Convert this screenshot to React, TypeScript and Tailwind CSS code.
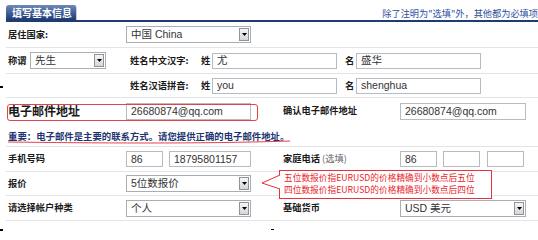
import React from "react";

const lbl =
  "font-['Noto_Sans_CJK_SC',sans-serif] text-[9.25px] font-bold text-[#1a1a1a] leading-none whitespace-nowrap";

const Arrow = () => (
  <span className="absolute right-[1px] top-[1px] bottom-[1px] flex w-[10px] items-center justify-center border border-[#8e949a] bg-gradient-to-b from-[#f6f6f6] to-[#d6d6d6]">
    <svg width="5" height="3" viewBox="0 0 5 3">
      <path d="M0 0h5L2.5 3z" fill="#000" />
    </svg>
  </span>
);

const Select = ({ value, w }: { value: string; w: string }) => (
  <div
    className={`relative flex h-[17px] shrink-0 items-center border border-[#a7aeb6] bg-white ${w}`}
  >
    <span className="pl-[4px] font-['Liberation_Sans','Noto_Sans_CJK_SC',sans-serif] text-[10.5px] leading-none text-[#333]">
      {value}
    </span>
    <Arrow />
  </div>
);

const Field = ({ value = "", w, h = "h-[16px]" }: { value?: string; w: string; h?: string }) => (
  <div
    className={`flex shrink-0 items-center border border-[#b7bcc3] bg-white pl-[4px] font-['Liberation_Sans','Noto_Sans_CJK_SC',sans-serif] text-[10.5px] leading-none text-[#333] ${w} ${h}`}
  >
    {value}
  </div>
);

const NameRow = ({
  title,
  last,
  first,
}: {
  title: string;
  last: string;
  first: string;
}) => (
  <>
    <span className={`w-[71px] shrink-0 ${lbl}`}>{title}</span>
    <span className={`w-[11px] shrink-0 ${lbl}`}>姓</span>
    <Field value={last} w="w-[125px]" />
    <span className="w-[8px] shrink-0" />
    <span className={`w-[11px] shrink-0 ${lbl}`}>名</span>
    <Field value={first} w="w-[125px]" />
  </>
);

export default function App() {
  return (
    <div className="relative h-[231px] w-[538px] overflow-hidden bg-white">
      {/* tab header */}
      <div className="ml-[6px] flex h-[22px] items-end border-b-[2px] border-[#1f3b73]">
        <div className="flex h-[15px] w-[71px] shrink-0 items-center rounded-t-[3px] border-r border-[#c9d0dc] bg-gradient-to-b from-[#6e8aba] to-[#1d3a74] pl-[6px] font-['Noto_Sans_CJK_SC',sans-serif] text-[10px] font-bold leading-none text-white">
          填写基本信息
        </div>
        <span className="ml-auto shrink-0 pb-[2px] font-['Noto_Sans_CJK_SC',sans-serif] text-[9.2px] leading-none whitespace-nowrap text-[#2d4f9c]">
          除了注明为"选填"外，其他都为必填项
        </span>
      </div>

      <div className="ml-[6px]">
        <div className="flex h-[26px] items-center border-b border-[#e4e4e4]">
          <span className={`w-[120px] shrink-0 pl-[2px] ${lbl}`}>居住国家:</span>
          <Select value="中国 China" w="w-[125px]" />
        </div>

        <div className="flex h-[26px] items-center border-b border-[#e4e4e4]">
          <span className={`w-[24px] shrink-0 pl-[2px] ${lbl}`}>称谓</span>
          <Select value="先生" w="w-[76px]" />
          <span className="w-[24px] shrink-0" />
          <NameRow title="姓名中文汉字:" last="尤" first="盛华" />
        </div>

        <div className="flex h-[24px] items-center border-b border-[#e4e4e4]">
          <span className="w-[124px] shrink-0" />
          <NameRow title="姓名汉语拼音:" last="you" first="shenghua" />
        </div>

        <div className="flex h-[26px] items-center">
          <span className="w-[120px] shrink-0 pl-[2px] font-['Noto_Sans_CJK_SC',sans-serif] text-[12px] font-bold leading-none text-[#1a1a1a]">
            电子邮件地址
          </span>
          <Field value="26680874@qq.com" w="w-[125px]" h="h-[17px]" />
          <span className="w-[32px] shrink-0" />
          <span className={`w-[117px] shrink-0 ${lbl}`}>确认电子邮件地址</span>
          <Field value="26680874@qq.com" w="w-[126px]" h="h-[17px]" />
        </div>

        <div className="flex h-[23px] items-center border-b border-[#e4e4e4] pt-[3px]">
          <span className="pl-[2px] font-['Noto_Sans_CJK_SC',sans-serif] text-[9.4px] font-bold leading-none whitespace-nowrap text-[#1d3570]">
            重要：电子邮件是主要的联系方式。请您提供正确的电子邮件地址。
          </span>
        </div>

        <div className="flex h-[25px] items-center border-b border-[#e4e4e4]">
          <span className={`w-[120px] shrink-0 pl-[2px] ${lbl}`}>手机号码</span>
          <Field value="86" w="w-[37px]" />
          <span className="w-[6px] shrink-0" />
          <Field value="18795801157" w="w-[82px]" />
          <span className="w-[32px] shrink-0" />
          <span className={`w-[117px] shrink-0 ${lbl}`}>
            家庭电话 <span className="font-normal text-[#666]">(选填)</span>
          </span>
          <Field value="86" w="w-[37px]" />
          <span className="w-[6px] shrink-0" />
          <Field w="w-[37px]" />
          <span className="w-[7px] shrink-0" />
          <Field w="w-[37px]" />
        </div>

        <div className="flex h-[24px] items-center border-b border-[#e4e4e4]">
          <span className={`w-[120px] shrink-0 pl-[2px] ${lbl}`}>报价</span>
          <Select value="5位数报价" w="w-[125px]" />
        </div>

        <div className="flex h-[25px] items-center border-b border-[#e4e4e4]">
          <span className={`w-[120px] shrink-0 pl-[2px] ${lbl}`}>请选择帐户种类</span>
          <Select value="个人" w="w-[125px]" />
          <span className="w-[32px] shrink-0" />
          <span className={`w-[117px] shrink-0 ${lbl}`}>基础货币</span>
          <Select value="USD 美元" w="w-[126px]" />
        </div>
      </div>

      {/* red annotations */}
      <div className="absolute left-[7px] top-[104px] h-[17px] w-[251px] rounded-[3px] border border-[#e5424a]" />
      <svg className="absolute left-0 top-[138px]" width="300" height="8" viewBox="0 0 300 8">
        <path d="M8 4 C 90 5, 200 6, 290 3" stroke="#e5424a" strokeWidth="1" fill="none" />
      </svg>

      <div className="absolute left-[279px] top-[170px] flex h-[29px] w-[213px] flex-col justify-center gap-[3px] border border-[#e8323a] bg-white pl-[4px] font-['Noto_Sans_CJK_SC',sans-serif] text-[8.7px] leading-none whitespace-nowrap text-[#e8262a]">
        <span>五位数报价指EURUSD的价格精确到小数点后五位</span>
        <span>四位数报价指EURUSD的价格精确到小数点后四位</span>
      </div>
      <svg className="absolute left-[260px] top-[174px]" width="21" height="16" viewBox="0 0 21 16">
        <path d="M20 1 L2 9 L20 15" stroke="#e8323a" strokeWidth="1" fill="#fff" />
        <path d="M20 2 L20 14" stroke="#fff" strokeWidth="2" />
      </svg>

      {/* stray marks */}
      <div className="absolute left-0 top-[86px] h-[2px] w-[3px] bg-black" />
      <div className="absolute left-0 top-[229px] h-[2px] w-[3px] bg-black" />
      <div className="absolute left-[271px] top-[229px] h-[1px] w-[3px] bg-black" />
    </div>
  );
}
